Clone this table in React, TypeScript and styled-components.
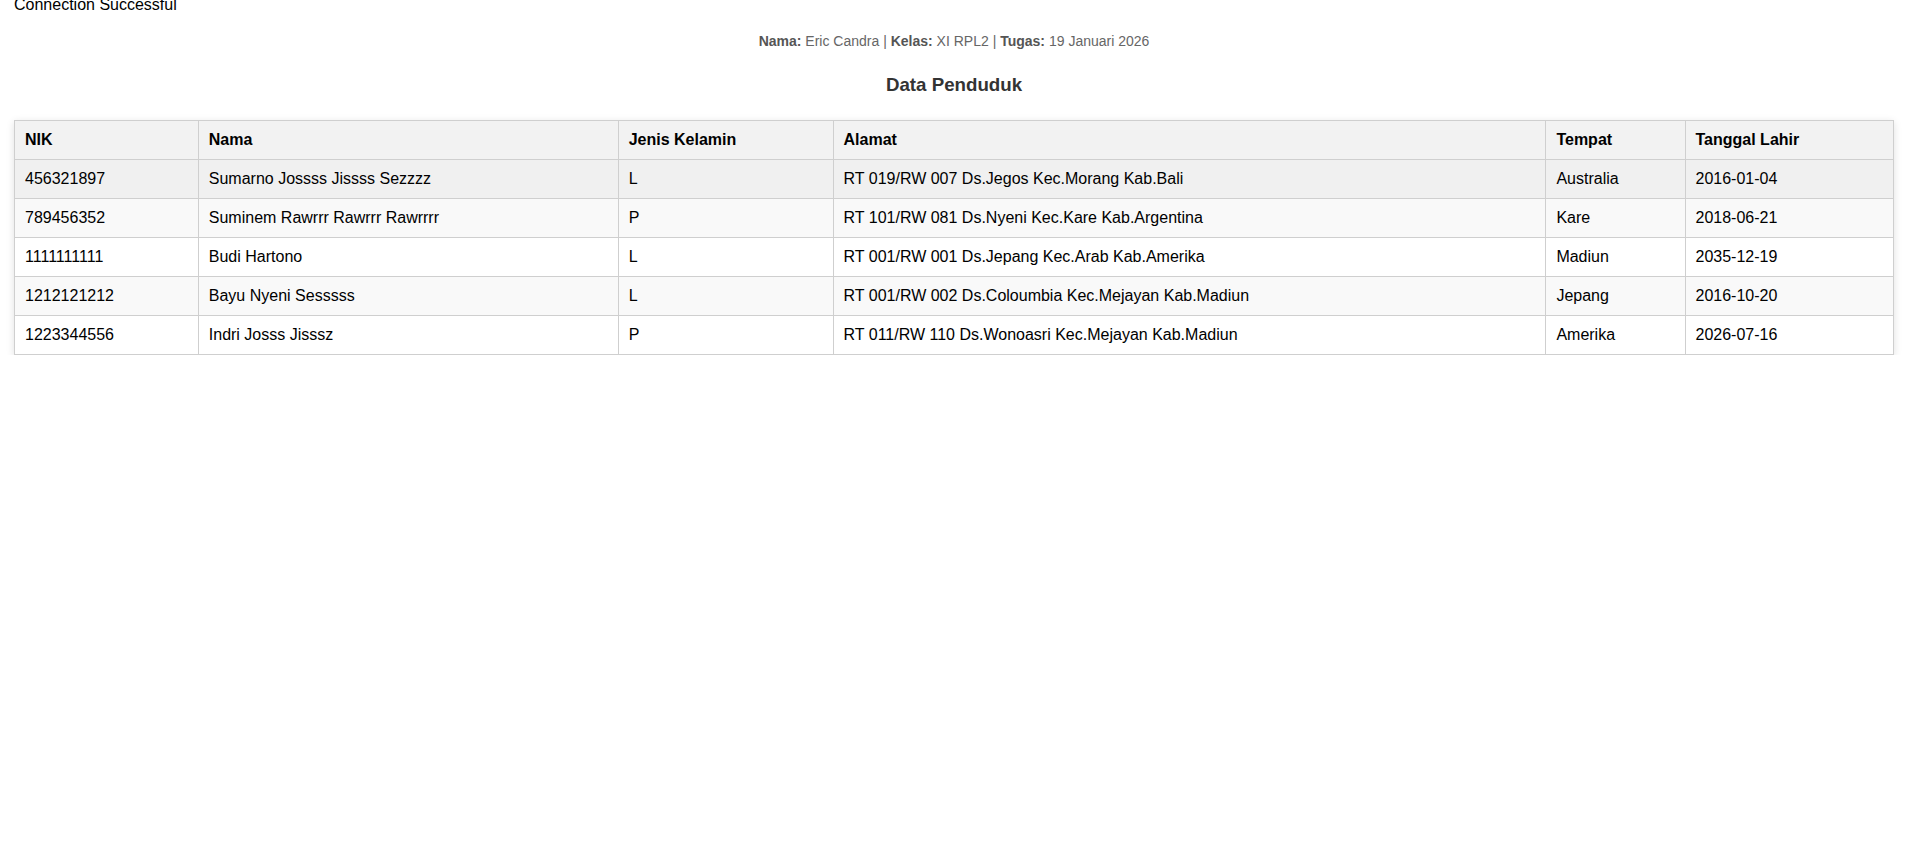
import React from "react";
import styled, { createGlobalStyle } from "styled-components";

const GlobalStyle = createGlobalStyle`
  html, body {
    margin: 0;
    padding: 0;
    background: #ffffff;
  }
  body {
    font-family: "Liberation Sans", Arial, sans-serif;
    font-size: 16px;
    color: #000;
  }
`;

const Page = styled.div`
  padding: 0 14px;
  overflow: hidden;
`;

const Status = styled.div`
  margin-top: -4px;
  font-size: 16px;
  line-height: 18.4px;
  color: #000;
`;

const Info = styled.p`
  margin: 19px 0 0;
  text-align: center;
  font-size: 14px;
  line-height: 16px;
  color: #666;

  b {
    color: #555;
    font-weight: bold;
  }
`;

const Title = styled.h3`
  margin: 25px 0 0;
  text-align: center;
  font-size: 18.72px;
  line-height: 21.5px;
  font-weight: bold;
  color: #333;
`;

const Table = styled.table`
  margin-top: 24px;
  width: 100%;
  border-collapse: collapse;
  box-shadow: 0 2px 8px rgba(0, 0, 0, 0.12);
  background: #fff;
`;

const HeadCell = styled.th`
  padding: 10px;
  line-height: 18px;
  text-align: left;
  font-weight: bold;
  color: #000;
  background: #f2f2f2;
  border: 1px solid #cfcfcf;
`;

const Row = styled.tr<{ $tone: "hover" | "stripe" | "plain" }>`
  background: ${({ $tone }) =>
    $tone === "hover" ? "#f0f0f0" : $tone === "stripe" ? "#f9f9f9" : "#ffffff"};
`;

const Cell = styled.td`
  padding: 10px;
  line-height: 18px;
  color: #000;
  border: 1px solid #cfcfcf;
`;

const headers = ["NIK", "Nama", "Jenis Kelamin", "Alamat", "Tempat", "Tanggal Lahir"];

const rows = [
  ["456321897", "Sumarno Jossss Jissss Sezzzz", "L", "RT 019/RW 007 Ds.Jegos Kec.Morang Kab.Bali", "Australia", "2016-01-04"],
  ["789456352", "Suminem Rawrrr Rawrrr Rawrrrr", "P", "RT 101/RW 081 Ds.Nyeni Kec.Kare Kab.Argentina", "Kare", "2018-06-21"],
  ["1111111111", "Budi Hartono", "L", "RT 001/RW 001 Ds.Jepang Kec.Arab Kab.Amerika", "Madiun", "2035-12-19"],
  ["1212121212", "Bayu Nyeni Sesssss", "L", "RT 001/RW 002 Ds.Coloumbia Kec.Mejayan Kab.Madiun", "Jepang", "2016-10-20"],
  ["1223344556", "Indri Josss Jisssz", "P", "RT 011/RW 110 Ds.Wonoasri Kec.Mejayan Kab.Madiun", "Amerika", "2026-07-16"],
];

export default function App() {
  return (
    <>
      <GlobalStyle />
      <Page>
        <Status>Connection Successful</Status>
        <Info>
          <b>Nama:</b> Eric Candra | <b>Kelas:</b> XI RPL2 | <b>Tugas:</b> 19 Januari 2026
        </Info>
        <Title>Data Penduduk</Title>
        <Table>
          <thead>
            <tr>
              {headers.map((h) => (
                <HeadCell key={h}>{h}</HeadCell>
              ))}
            </tr>
          </thead>
          <tbody>
            {rows.map((r, i) => (
              <Row key={r[0]} $tone={i === 0 ? "hover" : i % 2 === 1 ? "stripe" : "plain"}>
                {r.map((c, j) => (
                  <Cell key={j}>{c}</Cell>
                ))}
              </Row>
            ))}
          </tbody>
        </Table>
      </Page>
    </>
  );
}
